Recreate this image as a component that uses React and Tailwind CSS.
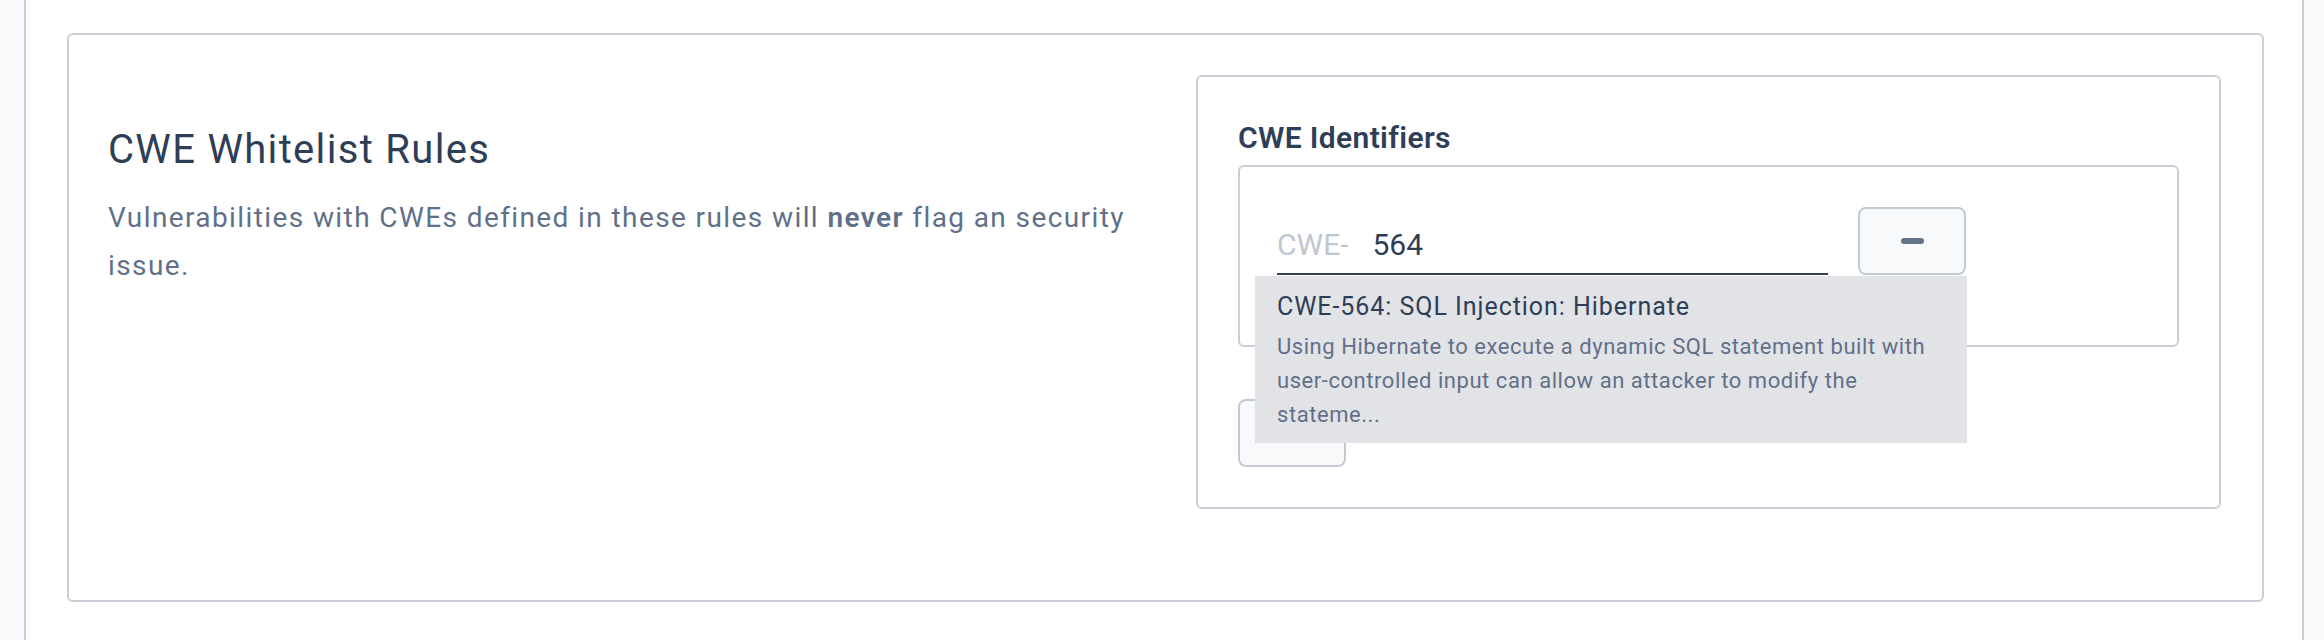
import React from "react";

function MinusBar() {
  return <span className="block h-[6px] w-[23px] rounded-[3px] bg-[#637389]" />;
}

export default function App() {
  return (
    <div className="min-h-[640px] bg-[#f8f9fb] pl-[24px] pr-[20px] font-['Roboto','Liberation_Sans',sans-serif]">
      <div className="min-h-[640px] border-x-2 border-[#c8cdd8] bg-white pl-[41px] pr-[38px] pt-[33px]">
        <div className="flex rounded-[6px] border-2 border-[#c9ced7] pl-[39px] pr-[41px] pt-[40px] pb-[91px]">
          {/* Left column */}
          <div className="flex-1 pr-[50px] pt-[51px]">
            <h2 className="text-[40px] leading-[48px] font-normal tracking-[0.033em] text-[#2f3e57]">
              CWE Whitelist Rules
            </h2>
            <p className="mt-[20px] text-[28px] leading-[48px] tracking-[0.05em] text-[#617089]">
              Vulnerabilities with CWEs defined in these rules will{" "}
              <span className="font-semibold">never</span> flag an security issue.
            </p>
          </div>

          {/* Right panel */}
          <div className="w-[1025px] shrink-0 rounded-[6px] border-2 border-[#c9ced7] p-[40px]">
            <div className="mb-[6px] text-[30px] leading-[42px] font-semibold tracking-[0.012em] text-[#2f3e57]">
              CWE Identifiers
            </div>
            <div className="rounded-[6px] border-2 border-[#c9ced7] pl-[37px] pt-[40px] pb-[70px]">
              <div className="relative flex items-start gap-[30px]">
                <div className="flex h-[68px] w-[551px] items-start gap-[24px] border-b-2 border-[#33415a] pt-[18px] text-[30px] leading-[40px]">
                  <span className="text-[#c1c7d0]">CWE-</span>
                  <span className="text-[#2f3e57]">564</span>
                </div>
                <button className="flex h-[68px] w-[108px] items-center justify-center rounded-[8px] border-2 border-[#c3c9d3] bg-[#f8f9fb]">
                  <MinusBar />
                </button>

                {/* Dropdown suggestion */}
                <div className="absolute top-[69px] left-[-22px] z-10 w-[712px] bg-[#e1e3e7] pl-[22px] pr-[30px] pt-[14px] pb-[11px]">
                  <div className="text-[25px] leading-[34px] tracking-[0.038em] text-[#2f3e57]">
                    CWE-564: SQL Injection: Hibernate
                  </div>
                  <div className="mt-[6px] text-[22px] leading-[34px] tracking-[0.025em] text-[#617089]">
                    Using Hibernate to execute a dynamic SQL statement built with user-controlled input can allow an attacker to modify the stateme...
                  </div>
                </div>
              </div>
            </div>
            <button className="mt-[52px] flex h-[68px] w-[108px] items-center justify-center rounded-[8px] border-2 border-[#c3c9d3] bg-[#f8f9fb]">
              <svg width="14" height="14" viewBox="0 0 22 22">
                <rect x="8" y="0" width="6" height="22" rx="3" fill="#637389" />
                <rect x="0" y="8" width="22" height="6" rx="3" fill="#637389" />
              </svg>
            </button>
          </div>
        </div>
      </div>
    </div>
  );
}
